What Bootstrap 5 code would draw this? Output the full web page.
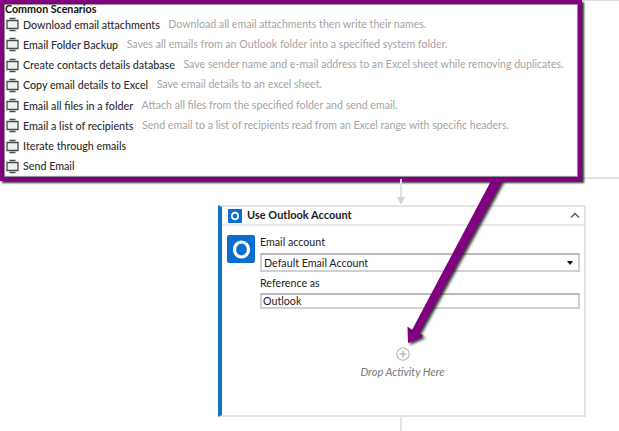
<!DOCTYPE html>
<html lang="en">
<head>
<meta charset="utf-8">
<title>Common Scenarios</title>
<link rel="stylesheet" href="https://cdn.jsdelivr.net/npm/bootstrap@5.3.0/dist/css/bootstrap.min.css">
<style>
html,body{height:431px;overflow:hidden;background:#fff}
body{font-family:"Lato","Open Sans",sans-serif;font-size:10.7px;color:#333}
.stage{position:relative;width:619px;height:431px;overflow:hidden}
.scen-zone{height:179px;border-top:1px solid #ddd;border-bottom:2px solid #e2e2e2;margin-top:0}
.scen-panel{width:582px;height:181px;margin-top:-1px;border:4px solid #800080;box-shadow:inset 0 0 1px 1px rgba(40,40,40,.55),2px 2px 2px #333;background:#fff;overflow:hidden;position:relative}
.scen-title{height:10.5px;line-height:9px;font-weight:700;color:#111;padding-left:1px;white-space:nowrap}
.scen-row{height:20.25px;white-space:nowrap;padding-left:1px}
.scen-row svg{flex:none;margin-right:3px}
.scen-name{color:#2e2e2e;font-weight:500;margin-right:8.5px}
.scen-desc{color:#a4a4a4;font-size:10.6px}
.link-v{width:2px;background:#e4e4e4;margin-left:400px}
.link-top{height:18px;position:relative}
.link-tip{width:0;height:0;margin-left:397px;border-left:4px solid transparent;border-right:4px solid transparent;border-top:8px solid #d6d6d6}
.seq-card{width:368px;height:212px;margin-left:218px;border:2px solid #e4e4e4;border-left:4px solid #0f76c6;border-radius:0;background:#fff}
.seq-head{height:19px;border-bottom:2px solid #e8e8e8;padding:0 4px 0 6px;font-weight:700;color:#222;font-size:11px}
.seq-head svg{flex:none}
.seq-head .seq-title{margin-left:1px}
.seq-body{padding:9px 4px 0 5px}
.big-logo{flex:none;margin-right:5px}
.fld-col{flex:1 1 auto;min-width:0}
.fld-label{line-height:14px;color:#222;height:18px}
.fld-box{border:2px solid #cfcfd4;border-top-color:#b9b9bf;height:19px;line-height:15px;padding:0 2px;color:#222;background:#fff;border-radius:0}
.fld-sel{margin-bottom:4px}
.fld-inp{height:16px;line-height:12px;padding:0 1px;margin-top:-1px}
.sel-caret{width:0;height:0;border-left:3px solid transparent;border-right:3px solid transparent;border-top:4px solid #111;margin-right:3px}
.drop-zone{margin-top:38px;margin-left:-2px;color:#777;font-style:italic;font-size:11px;line-height:14px}
.drop-zone svg{display:block;margin-bottom:4px}
.link-bottom{height:15px}
.arrow-over{position:absolute;left:0;top:0;pointer-events:none;filter:drop-shadow(2px 2px 1.5px rgba(0,0,0,.8))}
</style>
</head>
<body>
<div class="stage">
  <svg width="0" height="0" class="d-block">
    <symbol id="act" viewBox="0 0 15 15">
      <path d="M2 3.500h11v8H2z" fill="#f0f0f0" stroke="#4a4a4a" stroke-width="1.300"/>
      <path d="M4.500 1.500h6M4.500 13.500h6" stroke="#4a4a4a" stroke-width="1.600" fill="none"/>
    </symbol>
  </svg>
  <div class="scen-zone">
    <div class="scen-panel">
      <div class="scen-title">Common Scenarios</div>
      <div class="scen-row d-flex align-items-center"><svg width="15" height="15"><use href="#act"/></svg><span class="scen-name">Download email attachments</span><span class="scen-desc">Download all email attachments then write their names.</span></div>
      <div class="scen-row d-flex align-items-center"><svg width="15" height="15"><use href="#act"/></svg><span class="scen-name">Email Folder Backup</span><span class="scen-desc">Saves all emails from an Outlook folder into a specified system folder.</span></div>
      <div class="scen-row d-flex align-items-center"><svg width="15" height="15"><use href="#act"/></svg><span class="scen-name">Create contacts details database</span><span class="scen-desc">Save sender name and e-mail address to an Excel sheet while removing duplicates.</span></div>
      <div class="scen-row d-flex align-items-center"><svg width="15" height="15"><use href="#act"/></svg><span class="scen-name">Copy email details to Excel</span><span class="scen-desc">Save email details to an excel sheet.</span></div>
      <div class="scen-row d-flex align-items-center"><svg width="15" height="15"><use href="#act"/></svg><span class="scen-name">Email all files in a folder</span><span class="scen-desc">Attach all files from the specified folder and send email.</span></div>
      <div class="scen-row d-flex align-items-center"><svg width="15" height="15"><use href="#act"/></svg><span class="scen-name">Email a list of recipients</span><span class="scen-desc">Send email to a list of recipients read from an Excel range with specific headers.</span></div>
      <div class="scen-row d-flex align-items-center"><svg width="15" height="15"><use href="#act"/></svg><span class="scen-name">Iterate through emails</span></div>
      <div class="scen-row d-flex align-items-center"><svg width="15" height="15"><use href="#act"/></svg><span class="scen-name">Send Email</span></div>
    </div>
  </div>
  <div class="link-v link-top"></div>
  <div class="link-tip"></div>
  <div class="seq-card">
    <div class="seq-head d-flex align-items-center">
      <svg width="14" height="14" class="me-1" viewBox="0 0 14 14"><rect width="14" height="14" rx="1" fill="#0a6ed1"/><ellipse cx="7" cy="7" rx="3.200" ry="3.400" fill="none" stroke="#fff" stroke-width="1.800"/></svg>
      <span class="flex-grow-1 seq-title">Use Outlook Account</span>
      <svg width="10" height="7" viewBox="0 0 10 7"><path d="M1 5.500 5 1.500l4 4" fill="none" stroke="#555" stroke-width="1.400"/></svg>
    </div>
    <div class="seq-body">
      <div class="d-flex">
        <svg class="big-logo" width="28" height="28" viewBox="0 0 28 28"><rect width="28" height="28" rx="2" fill="#0a6ed1"/><ellipse cx="14.500" cy="14.500" rx="7" ry="7.500" fill="none" stroke="#fff" stroke-width="3.200"/></svg>
        <div class="fld-col">
          <div class="fld-label">Email account</div>
          <div class="fld-box fld-sel d-flex align-items-center justify-content-between"><span>Default Email Account</span><span class="sel-caret"></span></div>
          <div class="fld-label">Reference as</div>
          <div class="fld-box fld-inp">Outlook</div>
        </div>
      </div>
      <div class="drop-zone d-flex flex-column align-items-center">
        <svg width="14" height="14" viewBox="0 0 14 14"><circle cx="7" cy="7" r="6.200" fill="none" stroke="#b5b5b5" stroke-width="1.100"/><path d="M7 3.500v7M3.500 7h7" stroke="#a5a5a5" stroke-width="1.100"/></svg>
        <span>Drop Activity Here</span>
      </div>
    </div>
  </div>
  <div class="link-v link-bottom"></div>
  <svg class="arrow-over" width="619" height="431" viewBox="0 0 619 431">
    <path d="M491.500 180 502.500 180 419 333 423.500 336 408 343 407.500 326.500 412 330Z" fill="#800080"/>
  </svg>
</div>
<script src="https://cdn.jsdelivr.net/npm/bootstrap@5.3.0/dist/js/bootstrap.bundle.min.js"></script>
</body>
</html>
